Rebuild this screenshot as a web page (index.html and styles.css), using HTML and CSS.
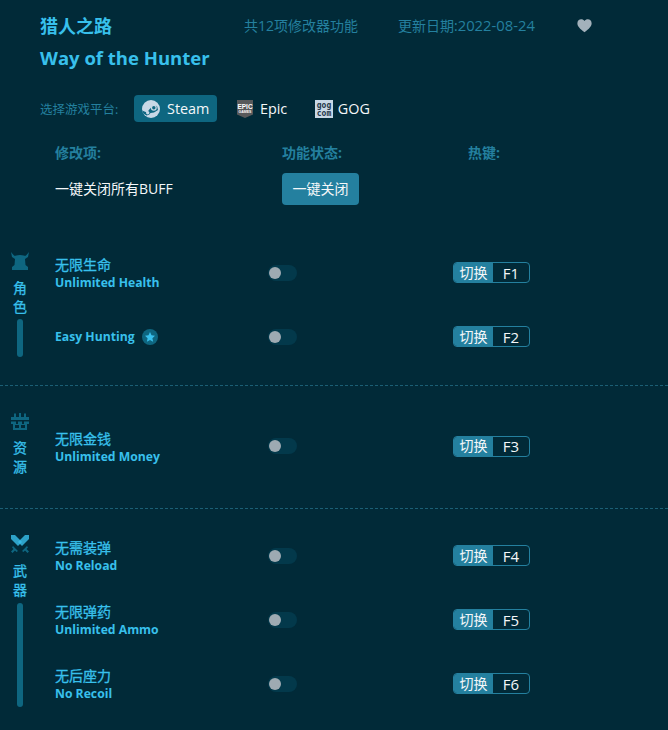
FILE: index.html
```html
<!DOCTYPE html>
<html lang="zh-CN">
<head>
  <meta charset="UTF-8" />
  <title>猎人之路 Way of the Hunter</title>
  <link rel="stylesheet" href="styles.css">
</head>
<body>
  <!-- Game header -->
  <header class="head">
    <div class="head-top">
      <h1 class="title-cn">猎人之路</h1>
      <span class="meta meta-count">共12项修改器功能</span>
      <span class="meta meta-date">更新日期:<span class="meta-num">2022-08-24</span></span>
      <svg class="heart" viewBox="0 0 16 15"><path d="M8 14.6C3 10.8.4 8.3.4 5 .4 2.500 2.300.8 4.400.8c1.500 0 2.800.7 3.600 2 .8-1.300 2.100-2 3.600-2 2.100 0 4 1.700 4 4.200 0 3.300-2.600 5.800-7.600 9.600z"/></svg>
    </div>
    <h2 class="title-en">Way of the Hunter</h2>
    <div class="platforms">
      <span class="platform-label">选择游戏平台:</span>
      <button class="platform platform-on">
        <svg class="platform-icon" viewBox="0 0 18 18">
          <circle cx="9" cy="9" r="9" fill="#c8d8e6"/>
          <path d="M0 10.500 5 12.600 7.500 9.200 11 5.500 15 6 16 10 12 12.500 8.500 13 7 14.800 4.500 15.500 1.500 13.500z" fill="#0e6680"/>
          <circle cx="11.800" cy="7.700" r="3" fill="#c8d8e6"/>
          <circle cx="11.800" cy="7.700" r="1.700" fill="#0e6680"/>
          <circle cx="5.700" cy="12.700" r="1.700" fill="#c8d8e6"/>
        </svg>
        Steam
      </button>
      <button class="platform">
        <svg class="platform-icon icon-epic" viewBox="0 0 16 18">
          <path d="M0 0H16V14.500L8 18 0 14.500z" fill="#58595b"/>
          <text class="epic-big" x="8" y="8.500" text-anchor="middle">EPIC</text>
          <text class="epic-small" x="8" y="13" text-anchor="middle">GAMES</text>
        </svg>
        Epic
      </button>
      <button class="platform platform-gog">
        <svg class="platform-icon" viewBox="0 0 18 18">
          <rect width="18" height="18" fill="#c8d8e6"/>
          <text class="gog-text" x="9" y="8" text-anchor="middle">gog</text>
          <text class="gog-text" x="9" y="15.500" text-anchor="middle">com</text>
        </svg>
        GOG
      </button>
    </div>
  </header>

  <!-- Column titles and the close-all row -->
  <div class="row-grid col-titles">
    <span>修改项:</span>
    <span>功能状态:</span>
    <span class="col-key">热键:</span>
  </div>
  <div class="row-grid close-all">
    <span class="close-label">一键关闭所有BUFF</span>
    <button class="close-btn">一键关闭</button>
  </div>

  <!-- Role -->
  <section class="group group-role">
    <div class="side">
      <svg class="side-icon" viewBox="0 0 18 18"><path d="M0 0 3 3.500C4 4.500 4.500 3 9 3s5 1.500 6 .5L18 0 17 5 14 7 14.500 13 17 15V18H1V15L3.500 13 4 7 1 5z"/></svg>
      <span class="side-text">角</span>
      <span class="side-text">色</span>
      <span class="side-bar bar-short"></span>
    </div>
    <div class="rows">
      <div class="row-grid item">
        <div class="names"><span class="name-cn">无限生命</span><span class="name-en">Unlimited Health</span></div>
        <span class="toggle"><i></i></span>
        <div class="hotkey"><span>切换</span><b>F1</b></div>
      </div>
      <div class="row-grid item">
        <div class="names names-line">
          <span class="name-en">Easy Hunting</span>
          <span class="star"><svg viewBox="0 0 10 10"><path d="M5 0 6.500 3.300 10 3.800 7.400 6.200 8.100 9.800 5 8 1.900 9.800 2.600 6.200 0 3.800 3.500 3.300z"/></svg></span>
        </div>
        <span class="toggle"><i></i></span>
        <div class="hotkey"><span>切换</span><b>F2</b></div>
      </div>
    </div>
  </section>

  <!-- Resources -->
  <section class="group group-res">
    <div class="side">
      <svg class="side-icon" viewBox="0 0 18 18"><path d="M3 5V1.500H5V5H8V1H10V5H13V1.500H15V5H18V8H0V5zM0 9.500H5V12H7V9.500H11V12H13V9.500H18V12H16V18H2V12H0zM4 13V16H8V13zM10 13V16H14V13z" fill-rule="evenodd"/></svg>
      <span class="side-text">资</span>
      <span class="side-text">源</span>
    </div>
    <div class="rows">
      <div class="row-grid item">
        <div class="names"><span class="name-cn">无限金钱</span><span class="name-en">Unlimited Money</span></div>
        <span class="toggle"><i></i></span>
        <div class="hotkey"><span>切换</span><b>F3</b></div>
      </div>
    </div>
  </section>

  <!-- Weapons -->
  <section class="group group-weapon">
    <div class="side">
      <svg class="side-icon" viewBox="0 0 18 18">
        <path class="sword-a" d="M0 0H4L11 7 7 11 0 4z"/>
        <path class="sword-a" d="M18 0H14L7 7 11 11 18 4z"/>
        <path d="M2 11 7 16 5.500 17 4 15.500 1.500 18 0 16.500 2.500 14 1 12.500zM16 11 11 16 12.500 17 14 15.500 16.500 18 18 16.500 15.500 14 17 12.500z"/>
      </svg>
      <span class="side-text">武</span>
      <span class="side-text">器</span>
      <span class="side-bar bar-long"></span>
    </div>
    <div class="rows">
      <div class="row-grid item">
        <div class="names"><span class="name-cn">无需装弹</span><span class="name-en">No Reload</span></div>
        <span class="toggle"><i></i></span>
        <div class="hotkey"><span>切换</span><b>F4</b></div>
      </div>
      <div class="row-grid item">
        <div class="names"><span class="name-cn">无限弹药</span><span class="name-en">Unlimited Ammo</span></div>
        <span class="toggle"><i></i></span>
        <div class="hotkey"><span>切换</span><b>F5</b></div>
      </div>
      <div class="row-grid item">
        <div class="names"><span class="name-cn">无后座力</span><span class="name-en">No Recoil</span></div>
        <span class="toggle"><i></i></span>
        <div class="hotkey"><span>切换</span><b>F6</b></div>
      </div>
    </div>
  </section>
</body>
</html>
```

FILE: styles.css
```css
/* Root Variables */
:root {
  --bg: #012a38;
  --bright: #38c0ec;
  --dim: #24809f;
  --blue: #0e6680;
  --white: #f4f7f9;
  --font: "Open Sans", "Noto Sans CJK SC", sans-serif;
}

* {
  margin: 0;
  padding: 0;
  box-sizing: border-box;
}
body {
  width: 668px;
  height: 730px;
  overflow: hidden;
  font-family: var(--font);
  background: var(--bg);
  color: var(--white);
}
button {
  font-family: inherit;
  border: none;
  color: inherit;
}

/* Header */
.head {
  padding: 12px 0 0 40px;
}
.head-top {
  display: flex;
  align-items: center;
  height: 26px;
}
.title-cn {
  width: 204px;
  font-size: 18px;
  font-weight: 700;
  color: var(--bright);
}
.meta {
  font-size: 14px;
  color: var(--dim);
}
.meta-count {
  width: 154px;
}
.meta-date {
  width: 179px;
}
.meta-num {
  font-size: 14.800px;
}
.heart {
  width: 15px;
  height: 15px;
  fill: #a3b1bb;
}
.title-en {
  margin-top: 7px;
  font-size: 18.500px;
  line-height: 26px;
  font-weight: 700;
  color: var(--bright);
}

/* Platform picker */
.platforms {
  display: flex;
  align-items: center;
  margin-top: 24px;
}
.platform-label {
  width: 94px;
  font-size: 12.500px;
  color: var(--dim);
}
.platform {
  display: flex;
  align-items: center;
  gap: 7px;
  height: 27px;
  padding: 0 8px;
  margin-right: 11.500px;
  font-size: 14.400px;
  background: none;
  border-radius: 4px;
}
.platform-on {
  background: var(--blue);
}
.platform-gog {
  gap: 5px;
}
.platform-icon {
  width: 18px;
  height: 18px;
}
.icon-epic {
  width: 16px;
}
.epic-big {
  font: 700 6.500px "Liberation Sans Narrow", "Liberation Sans", sans-serif;
  fill: #fff;
}
.epic-small {
  font: 700 3.500px "Liberation Sans", sans-serif;
  fill: #fff;
}
.gog-text {
  font: 700 8px "DejaVu Sans Mono", monospace;
  fill: #24374a;
}

/* Shared three-column row */
.row-grid {
  display: grid;
  grid-template-columns: 213px 185px 77px;
  align-items: center;
}
.col-titles {
  grid-template-columns: 227px 186px 60px;
  margin: 21px 0 0 55px;
  font-size: 14px;
  line-height: 20px;
  font-weight: 700;
  color: var(--dim);
}
.close-all {
  grid-template-columns: 227px 77px;
  margin: 10px 0 0 55px;
  font-size: 14px;
}
.close-label {
  padding-bottom: 2px;
}
.close-btn {
  height: 32px;
  padding-bottom: 2px;
  font-size: 14px;
  background: var(--dim);
  border-radius: 4px;
}

/* Sections */
.group {
  display: flex;
  align-items: center;
  padding: 15px 0;
}
.group-role {
  margin-top: 21px;
  height: 160px;
  padding: 14px 0 16px;
  border-bottom: 1px dashed #1b5f75;
}
.group-res {
  height: 123px;
  padding: 14px 0 16px;
  border-bottom: 1px dashed #1b5f75;
}
.group-weapon {
  height: 221px;
}
.side {
  align-self: flex-start;
  display: flex;
  flex-direction: column;
  align-items: center;
  width: 40px;
  margin-top: 12px;
  flex-shrink: 0;
}
.group-weapon .side {
  margin-top: 11px;
}
.side-icon {
  width: 18px;
  height: 18px;
  margin-bottom: 8px;
  fill: var(--blue);
}
.sword-a {
  fill: #38c0ec;
  opacity: .8;
}
.side-text {
  font-size: 14px;
  line-height: 19px;
  color: var(--bright);
  -webkit-text-stroke: .3px var(--bright);
}
.side-bar {
  width: 6px;
  margin-top: 3px;
  background: var(--blue);
  border-radius: 3px;
}
.bar-short {
  height: 38px;
}
.bar-long {
  height: 104px;
  margin-top: 4px;
}
.rows {
  padding-left: 15px;
}

/* Cheat rows */
.item {
  height: 64px;
}
.names {
  display: flex;
  flex-direction: column;
  margin-top: 2px;
  color: var(--bright);
}
.names-line {
  flex-direction: row;
  align-items: center;
  gap: 7px;
  margin-top: 0;
}
.name-cn {
  font-size: 14px;
  line-height: 18px;
  -webkit-text-stroke: .3px var(--bright);
}
.name-en {
  font-size: 12.200px;
  line-height: 17px;
  font-weight: 700;
}
.star {
  display: flex;
  align-items: center;
  justify-content: center;
  width: 16px;
  height: 16px;
  background: var(--blue);
  border-radius: 50%;
}
.star svg {
  width: 10px;
  height: 10px;
  fill: var(--bright);
}

/* Toggle */
.toggle {
  display: flex;
  align-items: center;
  width: 29px;
  height: 16px;
  padding-left: 1px;
  background: #03394b;
  border-radius: 8px;
}
.toggle i {
  width: 12px;
  height: 12px;
  background: #9eaab2;
  border-radius: 50%;
}

/* Hotkey */
.hotkey {
  display: flex;
  align-items: center;
  height: 21px;
  border: 1px solid var(--dim);
  border-radius: 4px;
  font-size: 14px;
  overflow: hidden;
}
.hotkey span {
  align-self: stretch;
  display: flex;
  align-items: center;
  justify-content: center;
  width: 39px;
  padding-bottom: 2px;
  background: var(--dim);
}
.hotkey b {
  flex: 1;
  text-align: center;
  font-size: 15px;
  font-weight: 400;
}
```
